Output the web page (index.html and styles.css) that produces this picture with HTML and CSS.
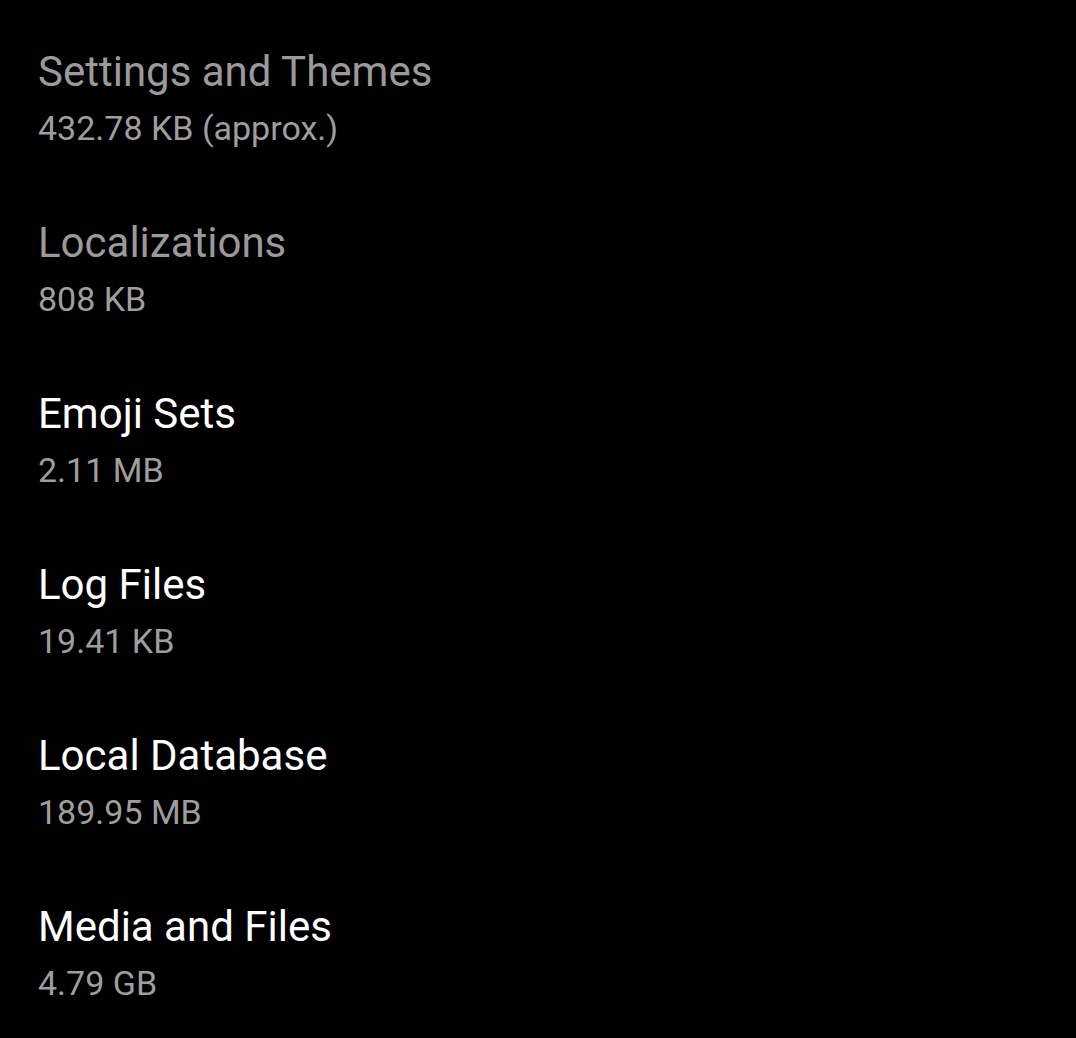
FILE: index.html
```html
<!DOCTYPE html>
<html lang="en">
<head>
    <meta charset="UTF-8">
    <meta name="viewport" content="width=device-width, initial-scale=1.0">
    <title>Storage Usage</title>
    <link rel="stylesheet" href="styles.css">
</head>
<body>
    <div class="pref-list">
        <div class="pref-item disabled">
            <div class="pref-title">Settings and Themes</div>
            <div class="pref-summary">432.78 KB (approx.)</div>
        </div>
        <div class="pref-item disabled">
            <div class="pref-title">Localizations</div>
            <div class="pref-summary">808 KB</div>
        </div>
        <div class="pref-item">
            <div class="pref-title">Emoji Sets</div>
            <div class="pref-summary">2.11 MB</div>
        </div>
        <div class="pref-item">
            <div class="pref-title">Log Files</div>
            <div class="pref-summary">19.41 KB</div>
        </div>
        <div class="pref-item">
            <div class="pref-title">Local Database</div>
            <div class="pref-summary">189.95 MB</div>
        </div>
        <div class="pref-item">
            <div class="pref-title">Media and Files</div>
            <div class="pref-summary">4.79 GB</div>
        </div>
    </div>
</body>
</html>
```

FILE: styles.css
```css
body {
    margin: 0;
    background-color: #000;
    font-family: Roboto, 'Noto Sans', sans-serif;
}

.pref-list {
    display: flex;
    flex-direction: column;
    padding-top: 23px;
}

.pref-item {
    display: flex;
    flex-direction: column;
    gap: 11px;
    padding: 24px 40px 46px 38px;
}

.pref-title {
    font-size: 42px;
    line-height: 50px;
    color: #ffffff;
}

.pref-item.disabled .pref-title {
    color: #9a9a9a;
}

.pref-summary {
    font-size: 34px;
    line-height: 40px;
    color: #9e9e9e;
}
```
